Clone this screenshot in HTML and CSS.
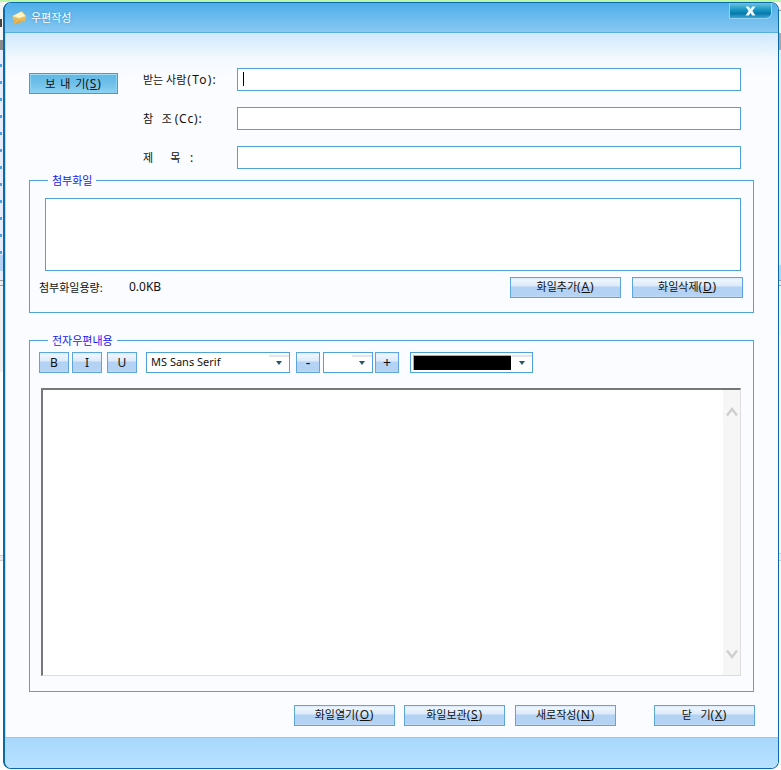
FILE: index.html
```html
<!DOCTYPE html>
<html lang="ko">

<head>
    <meta charset="UTF-8">
    <title>우편작성</title>
    <link rel="stylesheet" href="styles.css">
</head>

<body>
    <div class="window">
        <!-- Title bar -->
        <div class="titlebar">
            <svg class="title-icon" width="15" height="14" viewBox="0 0 15 14">
                <defs>
                    <linearGradient id="envBody" x1="0" y1="0" x2="0" y2="1">
                        <stop offset="0" stop-color="#f6dd8c" />
                        <stop offset="1" stop-color="#d8a23e" />
                    </linearGradient>
                </defs>
                <path d="M0.3 5 L9.6 0.2 L14.2 5 L13.2 10 L2.5 13.4 Z" fill="url(#envBody)" />
                <path d="M1 5 L9.4 1 L13.4 5 L7 7.2 Z" fill="#fff4c6" />
                <path d="M2.6 13 L7 7.4 L13 9.8" fill="none" stroke="#e9c36a" stroke-width="0.8" />
            </svg>
            <span class="title-text">우편작성</span>
            <button class="close-btn" type="button" aria-label="닫기">
                <svg width="11" height="10" viewBox="0 0 11 10">
                    <path d="M0.5 0.5 H3.8 L5.5 3 L7.2 0.5 H10.5 L7.4 5 L10.5 9.5 H7.2 L5.5 7 L3.8 9.5 H0.5 L3.6 5 Z" fill="#f2fbff" />
                </svg>
            </button>
        </div>

        <div class="main">
            <!-- Addresses -->
            <div class="compose-top">
                <button class="send-btn" type="button">보 내 기<span class="lat">(<u>S</u>)</span></button>
                <form class="address-form">
                    <label class="addr-label">받는 사람<span class="lat lat-wide">(To):</span></label>
                    <input class="field field-focus" type="text">
                    <label class="addr-label">참   조 <span class="lat">(Cc):</span></label>
                    <input class="field" type="text">
                    <label class="addr-label">제      목  <span class="lat"> :</span></label>
                    <input class="field" type="text">
                </form>
            </div>

            <!-- Attachments -->
            <fieldset class="group group-files">
                <legend>첨부화일</legend>
                <div class="file-list"></div>
                <div class="file-row">
                    <span class="size-label">첨부화일용량:</span>
                    <span class="size-value">0.0KB</span>
                    <button class="btn btn-file" type="button">화일추가<span class="lat">(<u>A</u>)</span></button>
                    <button class="btn btn-file" type="button">화일삭제<span class="lat">(<u>D</u>)</span></button>
                </div>
            </fieldset>

            <!-- Message body -->
            <fieldset class="group group-body">
                <legend>전자우편내용</legend>
                <div class="toolbar">
                    <button class="btn tool tool-b" type="button">B</button>
                    <button class="btn tool tool-i" type="button">I</button>
                    <button class="btn tool tool-u" type="button">U</button>
                    <div class="combo combo-font">
                        <span class="combo-text">MS Sans Serif</span>
                        <span class="combo-arrow"></span>
                    </div>
                    <button class="btn tool-small tool-minus" type="button">-</button>
                    <div class="combo combo-size">
                        <span class="combo-text"></span>
                        <span class="combo-arrow"></span>
                    </div>
                    <button class="btn tool-small tool-plus" type="button">+</button>
                    <div class="combo combo-color">
                        <span class="color-swatch"></span>
                        <span class="combo-arrow"></span>
                    </div>
                </div>
                <div class="editor">
                    <div class="editor-text"></div>
                    <div class="scrollbar">
                        <svg width="12" height="10" viewBox="0 0 12 10">
                            <path d="M1 8.5 L6 2 L11 8.5" fill="none" stroke="#cfcfcf" stroke-width="2.4" />
                        </svg>
                        <svg width="12" height="10" viewBox="0 0 12 10">
                            <path d="M1 1.5 L6 8 L11 1.5" fill="none" stroke="#cfcfcf" stroke-width="2.4" />
                        </svg>
                    </div>
                </div>
            </fieldset>

            <!-- Actions -->
            <div class="actions">
                <button class="btn btn-action" type="button">화일열기<span class="lat">(<u>O</u>)</span></button>
                <button class="btn btn-action" type="button">화일보관<span class="lat">(<u>S</u>)</span></button>
                <button class="btn btn-action action-new" type="button">새로작성<span class="lat">(<u>N</u>)</span></button>
                <button class="btn btn-action action-close" type="button">닫   기<span class="lat">(<u>X</u>)</span></button>
            </div>
        </div>

        <div class="footer"></div>
    </div>
</body>

</html>
```

FILE: styles.css
```css
/* Page and the windows behind the dialog */

* {
    box-sizing: border-box;
}

html,
body {
    margin: 0;
    height: 770px;
    overflow: hidden;
}

body {
    padding: 2px 2px 1px 3px;
    font-family: 'Noto Sans', 'Noto Sans CJK KR', sans-serif;
    font-size: 11px;
    color: #111;
    background-color: #fff;
    background-repeat: no-repeat;
    background-image:
        linear-gradient(#b9f7ab, #b9f7ab),
        linear-gradient(#444, #444),
        repeating-linear-gradient(to bottom, transparent 0 14px, #4f9fe6 14px 17px),
        linear-gradient(to bottom, #f4f4f4 0 40px, #8a8a8a 40px 50px, #e8ecff 50px 255px, #b4d2f6 255px 271px, #e8ecff 271px 280px, #999 280px 281px, #eee 281px 285px, #999 285px 286px, #f0f0f0 286px 372px, #fff 372px 555px, #ccc 555px 556px, #eee 556px 560px, #ccc 560px 561px, #fff 561px),
        linear-gradient(to bottom, #f4f4f4 0 10px, #999 10px 11px, #f4f4f4 11px 33px, #a8a8a8 33px 50px, #e8ecff 50px 265px, #b4d2f6 265px 280px, #999 280px 281px, #eee 281px 285px, #999 285px 286px, #f4f4ff 286px 335px, #fff 335px 553px, #ccc 553px 554px, #eee 554px 560px, #ccc 560px 561px, #fff 561px);
    background-size: 100% 2px, 2px 8px, 2px 205px, 3px 100%, 2px 100%;
    background-position: 0 0, 0 19px, 0 50px, 0 0, 100% 0;
}

/* Window frame */

.window {
    display: flex;
    flex-direction: column;
    width: 776px;
    height: 767px;
    border: 1px solid #0a69a6;
    border-left-width: 2px;
    border-radius: 8px;
    overflow: hidden;
    background-color: #fbfcff;
}

.titlebar {
    display: flex;
    align-items: flex-start;
    flex: none;
    height: 30px;
    border-bottom: 1px solid #58ade2;
    background: linear-gradient(to bottom, #4eaeea, #88c9f1);
}

.title-icon {
    margin: 8px 0 0 7px;
}

.title-text {
    margin: 7px 0 0 4px;
    line-height: 16px;
    color: #fff;
    text-shadow: 0 0 3px #2f8fcf;
}

.close-btn {
    display: flex;
    align-items: center;
    justify-content: center;
    width: 43px;
    height: 16px;
    margin-left: auto;
    margin-right: 6px;
    padding: 0;
    border: 1px solid #93d0f2;
    border-top: none;
    border-radius: 0 0 6px 0;
    background: linear-gradient(to bottom, #6cc4e2, #1897c4 45%, #0a79aa 70%, #3aa6d6);
}

.main {
    flex: 1;
    padding: 35px 24px 11px 23px;
    border-left: 1px solid #a6eaff;
    background: linear-gradient(to bottom, #cfe8fb 0, #f3f9fe 26px, #fbfcff 45px);
}

.footer {
    flex: none;
    height: 31px;
    border-top: 1px solid #8ccdf0;
    background: linear-gradient(to bottom, #a7d8fc, #b8e1ff);
}

/* Address fields */

.compose-top {
    display: flex;
    align-items: flex-start;
}

.send-btn {
    flex: none;
    width: 89px;
    height: 21px;
    margin-top: 5px;
    padding: 0;
    border: 1px solid #3f9fd4;
    font: inherit;
    font-size: 11px;
    white-space: pre;
    word-spacing: 2px;
    color: #111;
    box-shadow: inset 0 1px 0 #a8def6, inset 1px 0 0 #8fd2f2, inset -1px 0 0 #8fd2f2;
    background-image:
        linear-gradient(#e020d0, #e020d0), linear-gradient(#e020d0, #e020d0),
        linear-gradient(#e020d0, #e020d0), linear-gradient(#e020d0, #e020d0),
        linear-gradient(to bottom, #5fb6e6, #6fc0ea 50%, #8fd3f2);
    background-repeat: no-repeat;
    background-origin: border-box;
    background-size: 1px 1px, 1px 1px, 1px 1px, 1px 1px, 100% 100%;
    background-position: 0 0, 100% 0, 0 100%, 100% 100%, 0 0;
}

.address-form {
    display: grid;
    grid-template-columns: 94px 504px;
    row-gap: 16px;
    align-items: center;
    margin-left: 25px;
}

.addr-label {
    white-space: pre;
    font-size: 11px;
}

.lat {
    font-size: 12px;
    letter-spacing: 0.8px;
}

.lat-wide {
    margin-left: 1px;
    letter-spacing: 1.2px;
}

.field {
    display: block;
    width: 504px;
    height: 23px;
    margin: 0;
    border: 1px solid #4fa3d8;
    background-color: #fff;
}

.field-focus {
    background-image: linear-gradient(#000, #000);
    background-repeat: no-repeat;
    background-size: 1px 14px;
    background-position: 5px 3px;
}

/* Group boxes */

.group {
    min-width: 0;
    width: 725px;
    margin: 0;
    border: 1px solid #4fa3d8;
}

.group legend {
    margin-left: 9px;
    padding: 0 4px;
    line-height: 15px;
    font-size: 11px;
    color: #1a1aee;
}

.group-files {
    margin-top: 4px;
    padding: 10px 10px 14px 9px;
}

.group-body {
    margin-top: 20px;
    padding: 4px 10px 15px 9px;
}

.file-list {
    width: 696px;
    height: 73px;
    margin-left: 6px;
    border: 1px solid #4fa3d8;
    background-color: #fff;
}

.file-row {
    display: flex;
    align-items: center;
    margin-top: 6px;
}

.size-label {
    width: 90px;
    padding-bottom: 2px;
}

.size-value {
    font-size: 12px;
    margin-right: auto;
    padding-bottom: 2px;
}

/* Buttons */

.btn {
    height: 21px;
    padding: 0 0 2px;
    border: 1px solid #5ca6d9;
    font: inherit;
    font-size: 11px;
    white-space: pre;
    color: #111;
    background-image:
        linear-gradient(#e020d0, #e020d0), linear-gradient(#e020d0, #e020d0),
        linear-gradient(#e020d0, #e020d0), linear-gradient(#e020d0, #e020d0),
        linear-gradient(to bottom, #cfe2f7 0, #eef5fd 3px, #dceafa 9px, #b4d2f3 10px, #b4d2f3 18px, #c8def6 100%);
    background-repeat: no-repeat;
    background-origin: border-box;
    background-size: 1px 1px, 1px 1px, 1px 1px, 1px 1px, 100% 100%;
    background-position: 0 0, 100% 0, 0 100%, 100% 100%, 0 0;
}

.btn-file {
    width: 111px;
}

.btn-file + .btn-file {
    margin-left: 11px;
}

/* Toolbar */

.toolbar {
    display: flex;
}

.tool {
    width: 30px;
    padding: 0;
    font-size: 12px;
}

.tool-i {
    margin-left: 3px;
}

.tool-u {
    margin-left: 5px;
}

.tool-small {
    width: 24px;
    padding: 0;
    font-size: 14px;
    line-height: 14px;
}

.tool-minus {
    margin-left: 6px;
}

.tool-plus {
    margin-left: 2px;
}

.combo {
    display: flex;
    align-items: stretch;
    height: 21px;
    border: 1px solid #4fa3d8;
    background-color: #fff;
}

.combo-font {
    width: 144px;
    margin-left: 9px;
}

.combo-size {
    width: 50px;
    margin-left: 3px;
}

.combo-color {
    width: 123px;
    margin-left: 11px;
}

.combo-text {
    flex: 1;
    padding-left: 4px;
    line-height: 18px;
}

.color-swatch {
    flex: none;
    width: 98px;
    margin: 2px 0 2px 2px;
    border-top: 1px solid #aaa;
    border-left: 1px solid #aaa;
    background-color: #000;
}

.combo-arrow {
    display: flex;
    align-items: center;
    justify-content: center;
    flex: none;
    width: 20px;
    margin-left: auto;
    padding-top: 1px;
    background: linear-gradient(#dfe6f0, #dfe6f0) 0 2px / 100% 2px no-repeat;
}

.combo-arrow::after {
    content: "";
    border-style: solid;
    border-width: 4px 3.5px 0;
    border-color: #24596a transparent transparent;
}

/* Editor */

.editor {
    display: flex;
    width: 700px;
    height: 288px;
    margin: 15px 0 0 2px;
    border-style: solid;
    border-width: 2px 1px 1px 2px;
    border-color: #777 #ddd #ddd #777;
    background-color: #fff;
}

.editor-text {
    flex: 1;
}

.scrollbar {
    display: flex;
    flex-direction: column;
    justify-content: space-between;
    align-items: center;
    width: 17px;
    padding: 17px 0 16px;
    background-color: #f6f6f6;
}

/* Bottom row */

.actions {
    display: flex;
    margin-top: 13px;
    padding-left: 265px;
}

.btn-action {
    flex: none;
    width: 101px;
    margin-left: 9px;
}

.btn-action:first-child {
    margin-left: 0;
}

.action-new {
    margin-left: 10px;
}

.action-close {
    margin-left: 38px;
}
```
